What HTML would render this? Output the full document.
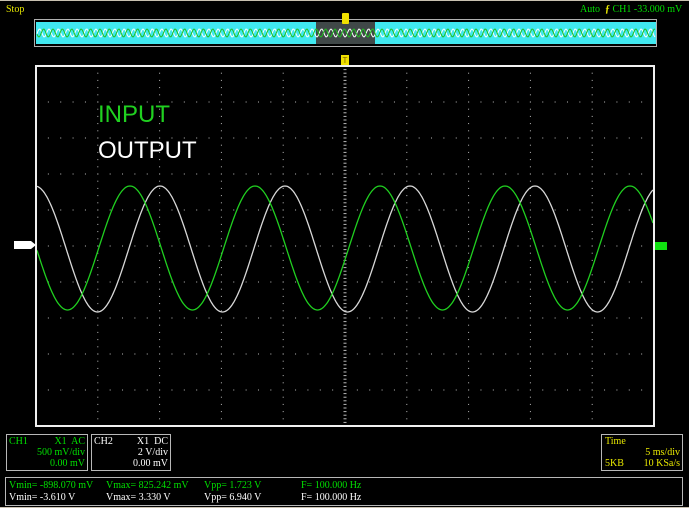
<!DOCTYPE html>
<html><head><meta charset="utf-8"><style>
html,body{margin:0;padding:0;background:#000;width:689px;height:508px;overflow:hidden;font-family:"Liberation Serif",serif;}
.t{position:absolute;font-size:10px;line-height:11px;white-space:nowrap;}
.box{position:absolute;border:1px solid #b8b8b8;box-sizing:border-box;}
</style></head><body>
<div style="position:absolute;left:0;top:0;width:689px;height:1px;background:#c8c0b0"></div>
<div style="position:absolute;left:0;top:507px;width:689px;height:1px;background:#c8c0b0"></div>
<div class="t" style="left:6px;top:4px;color:#e8e800">Stop</div>
<div class="t" style="left:580px;top:4px;color:#00e000">Auto &nbsp;<b style="color:#e8e800">&#x0192;</b> CH1 -33.000 mV</div>
<svg id="s" width="689" height="508" style="position:absolute;left:0;top:0">
<rect x="34.5" y="19.5" width="622" height="27" fill="none" stroke="#b0b0b0" stroke-width="1"/>
<rect x="36" y="22" width="620" height="22" fill="#40e8f0"/>
<rect x="316" y="22" width="59" height="22" fill="#404848"/>
<rect x="342" y="13" width="7" height="11" rx="1" fill="#f0e000"/>
<rect x="341" y="55" width="8" height="10" fill="#f0e000"/>
<text x="345" y="63" font-size="8" text-anchor="middle" fill="#806000" font-family="Liberation Sans">T</text>
<g id="grid"></g>
<g id="wav"></g>
<rect x="36" y="66" width="618" height="360" fill="none" stroke="#f0f0f0" stroke-width="2"/>
<path d="M14 241 h17 l5 4 l-5 4 h-17z" fill="#fff"/>
<rect x="655" y="242" width="12" height="8" fill="#10e010"/>
<text x="98" y="122" font-size="24" fill="#20d020" font-family="Liberation Sans">INPUT</text>
<text x="98" y="158" font-size="24" fill="#fff" font-family="Liberation Sans">OUTPUT</text>
</svg>
<div class="box" style="left:6px;top:434px;width:82px;height:37px"></div>
<div class="t" style="left:9px;top:436px;color:#00e000">CH1</div>
<div class="t" style="left:9px;top:436px;width:76px;text-align:right;color:#00e000">X1&nbsp; AC<br>500 mV/div<br>0.00 mV</div>
<div class="box" style="left:91px;top:434px;width:80px;height:37px"></div>
<div class="t" style="left:94px;top:436px;color:#fff">CH2</div>
<div class="t" style="left:94px;top:436px;width:74px;text-align:right;color:#fff">X1&nbsp; DC<br>2 V/div<br>0.00 mV</div>
<div class="box" style="left:601px;top:434px;width:82px;height:37px"></div>
<div class="t" style="left:605px;top:436px;color:#e8e800">Time</div>
<div class="t" style="left:605px;top:447px;width:75px;text-align:right;color:#e8e800">5 ms/div</div>
<div class="t" style="left:605px;top:458px;color:#e8e800">5KB</div>
<div class="t" style="left:605px;top:458px;width:75px;text-align:right;color:#e8e800">10 KSa/s</div>
<div class="box" style="left:5px;top:477px;width:678px;height:29px"></div>
<div class="t" style="left:9px;top:480px;color:#00e000">Vmin= -898.070 mV</div>
<div class="t" style="left:106px;top:480px;color:#00e000">Vmax= 825.242 mV</div>
<div class="t" style="left:204px;top:480px;color:#00e000">Vpp= 1.723 V</div>
<div class="t" style="left:301px;top:480px;color:#00e000">F= 100.000 Hz</div>
<div class="t" style="left:9px;top:492px;color:#fff">Vmin= -3.610 V</div>
<div class="t" style="left:106px;top:492px;color:#fff">Vmax= 3.330 V</div>
<div class="t" style="left:204px;top:492px;color:#fff">Vpp= 6.940 V</div>
<div class="t" style="left:301px;top:492px;color:#fff">F= 100.000 Hz</div>
<script>
var g=document.getElementById('grid'),w=document.getElementById('wav');
var h='';
var dx=61.8,dy=36;
for(var i=1;i<10;i++){var x=36+i*dx;var c=(i==5);var n=c?100:50;for(var j=0;j<=n;j++){var y=66+j*360/n;var ww=c?3:1;h+='<rect x="'+(x-ww/2)+'" y="'+(y-0.5)+'" width="'+ww+'" height="1" fill="#bbb"/>';}}
for(var j=1;j<10;j++){var y=66+j*dy;for(var i=0;i<=50;i++){var x=36+i*dx/5;h+='<rect x="'+(x-0.5)+'" y="'+(y-0.5)+'" width="1" height="1" fill="#bbb"/>';}}
g.innerHTML=h;
function wave(c,a,ph,col,x0,x1,per,sw){var p=[];for(var x=x0;x<=x1;x+=1){p.push(x+','+(c-a*Math.cos(2*Math.PI*(x-ph)/per)).toFixed(1));}
return '<polyline points="'+p.join(' ')+'" fill="none" stroke="'+col+'" stroke-width="'+sw+'"/>';}
var s='';
s+=wave(249,63,160,'#d8d8d8',37,653,125,1.3);
s+=wave(248,62,130,'#20d020',37,653,125,1.3);
s+=wave(33,4,2,'#fff',37,655,9.4,1);
s+=wave(33,4,6,'#20c020',37,655,9.4,1);
w.innerHTML=s;
</script>
</body></html>
